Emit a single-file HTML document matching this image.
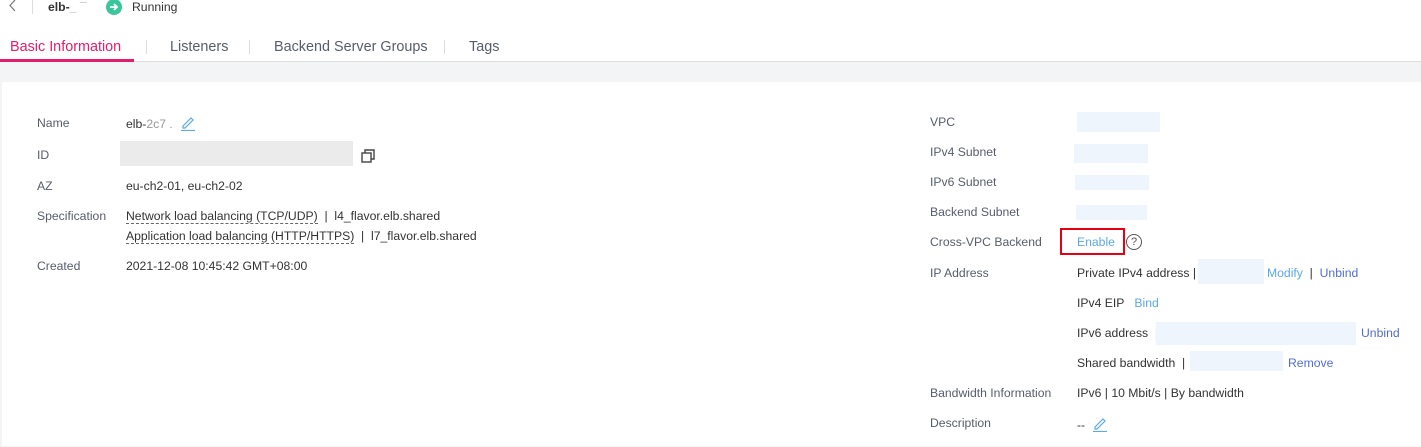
<!DOCTYPE html><html><head><style>
body{margin:0;width:1421px;height:446px;overflow:hidden;background:#fff;font-family:"Liberation Sans",sans-serif;font-size:12.2px;color:#333;position:relative}
.a{position:absolute;white-space:nowrap;line-height:14px}
.l{color:#575d6c}
.b{color:#526ecc}
.lk{color:#5ba9e6}
.blur{position:absolute;background:#eef5fc}
.u{border-bottom:1px dashed #666}
.t{position:absolute;white-space:nowrap;font-size:14.4px;line-height:16px;color:#575d6c;top:39px}
</style></head><body>
<svg style="position:absolute;left:8px;top:0" width="10" height="12" viewBox="0 0 10 12"><path d="M7 0 L2 5.5 L7 11" fill="none" stroke="#777" stroke-width="1.2"/></svg>
<div style="position:absolute;left:32px;top:0;width:1px;height:14px;background:#ddd"></div>
<div class="a" style="left:48px;top:0;font-weight:bold;color:#333">elb-<span style="color:#aaa">_ ¯</span></div>
<div style="position:absolute;left:106px;top:-1px;width:16px;height:16px;border-radius:50%;background:#3ac59b"></div>
<svg style="position:absolute;left:106px;top:-1px" width="16" height="16" viewBox="0 0 16 16"><path d="M4 8 H11 M8 5 L11 8 L8 11" fill="none" stroke="#fff" stroke-width="1.8"/></svg>
<div class="a" style="left:132px;top:0">Running</div>
<div class="t" style="left:10px;color:#e31c6c">Basic Information</div>
<div style="position:absolute;left:146px;top:40px;width:1px;height:14px;background:#ddd"></div>
<div class="t" style="left:170px">Listeners</div>
<div style="position:absolute;left:249px;top:40px;width:1px;height:14px;background:#ddd"></div>
<div class="t" style="left:274px">Backend Server Groups</div>
<div style="position:absolute;left:444px;top:40px;width:1px;height:14px;background:#ddd"></div>
<div class="t" style="left:469px">Tags</div>
<div style="position:absolute;left:0;top:61px;width:1421px;height:385px;background:#f3f4f6;border-top:1px solid #ddd"></div>
<div style="position:absolute;left:0;top:59px;width:134px;height:3px;background:#e31c6c"></div>
<div style="position:absolute;left:2px;top:82px;width:1419px;height:364px;background:#fff"></div>

<div class="a l" style="left:37px;top:116px">Name</div>
<div class="a" style="left:126px;top:117px">elb-<span style="color:#999">2c7 .</span></div>
<svg style="position:absolute;left:180px;top:115px" width="16" height="16" viewBox="0 0 16 16"><path d="M3 11 L11 3 L13 5 L5 13 L3 13 Z" fill="none" stroke="#5ba9e6" stroke-width="1.2"/><path d="M1 15.5 H15" stroke="#5ba9e6" stroke-width="1.2"/></svg>
<div class="a l" style="left:37px;top:148px">ID</div>
<div style="position:absolute;left:120px;top:141px;width:233px;height:25px;background:#ebebeb"></div>
<svg style="position:absolute;left:361px;top:149px" width="15" height="14" viewBox="0 0 15 14"><rect x="1" y="4" width="9" height="9" fill="none" stroke="#444" stroke-width="1.4"/><path d="M4 4 V1 H13 V10 H10" fill="none" stroke="#444" stroke-width="1.4"/></svg>
<div class="a l" style="left:37px;top:179px">AZ</div>
<div class="a" style="left:126px;top:179px">eu-ch2-01, eu-ch2-02</div>
<div class="a l" style="left:37px;top:209px">Specification</div>
<div class="a" style="left:126px;top:209px"><span class="u">Network load balancing (TCP/UDP)</span> &nbsp;|&nbsp; l4_flavor.elb.shared</div>
<div class="a" style="left:126px;top:229px"><span class="u">Application load balancing (HTTP/HTTPS)</span> &nbsp;|&nbsp; l7_flavor.elb.shared</div>
<div class="a l" style="left:37px;top:259px">Created</div>
<div class="a" style="left:126px;top:259px">2021-12-08 10:45:42 GMT+08:00</div>

<div class="a l" style="left:930px;top:115px">VPC</div>
<div class="blur" style="left:1077px;top:112px;width:83px;height:20px"></div>
<div class="a l" style="left:930px;top:145px">IPv4 Subnet</div>
<div class="blur" style="left:1074px;top:144px;width:74px;height:19px"></div>
<div class="a l" style="left:930px;top:175px">IPv6 Subnet</div>
<div class="blur" style="left:1075px;top:175px;width:74px;height:15px"></div>
<div class="a l" style="left:930px;top:205px">Backend Subnet</div>
<div class="blur" style="left:1076px;top:205px;width:71px;height:15px"></div>
<div class="a l" style="left:930px;top:235px">Cross-VPC Backend</div>
<div style="position:absolute;left:1060px;top:228px;width:65px;height:27px;border:2px solid #e60012;box-sizing:border-box"></div>
<div class="a lk" style="left:1077px;top:235px">Enable</div>
<div style="position:absolute;left:1126px;top:234px;width:14px;height:14px;border:1.3px solid #555;border-radius:50%;font-size:11px;line-height:14px;text-align:center;color:#555">?</div>
<div class="a l" style="left:930px;top:266px">IP Address</div>
<div class="a" style="left:1077px;top:266px">Private IPv4 address |</div>
<div class="blur" style="left:1198px;top:259px;width:66px;height:25px"></div>
<div class="a" style="left:1267px;top:266px"><span class="lk">Modify</span> &nbsp;|&nbsp; <span class="b">Unbind</span></div>
<div class="a" style="left:1077px;top:296px">IPv4 EIP &nbsp; <span class="lk">Bind</span></div>
<div class="a" style="left:1077px;top:326px">IPv6 address &nbsp;|</div>
<div class="blur" style="left:1156px;top:322px;width:200px;height:23px"></div>
<div class="a b" style="left:1361px;top:326px">Unbind</div>
<div class="a" style="left:1077px;top:356px">Shared bandwidth &nbsp;|</div>
<div class="blur" style="left:1190px;top:351px;width:93px;height:20px"></div>
<div class="a b" style="left:1288px;top:356px">Remove</div>
<div class="a l" style="left:930px;top:386px">Bandwidth Information</div>
<div class="a" style="left:1077px;top:386px">IPv6 | 10 Mbit/s | By bandwidth</div>
<div class="a l" style="left:930px;top:416px">Description</div>
<div class="a" style="left:1077px;top:418px">--</div>
<svg style="position:absolute;left:1092px;top:416px" width="16" height="16" viewBox="0 0 16 16"><path d="M3 11 L11 3 L13 5 L5 13 L3 13 Z" fill="none" stroke="#5ba9e6" stroke-width="1.2"/><path d="M1 15.5 H15" stroke="#5ba9e6" stroke-width="1.2"/></svg>
</body></html>
